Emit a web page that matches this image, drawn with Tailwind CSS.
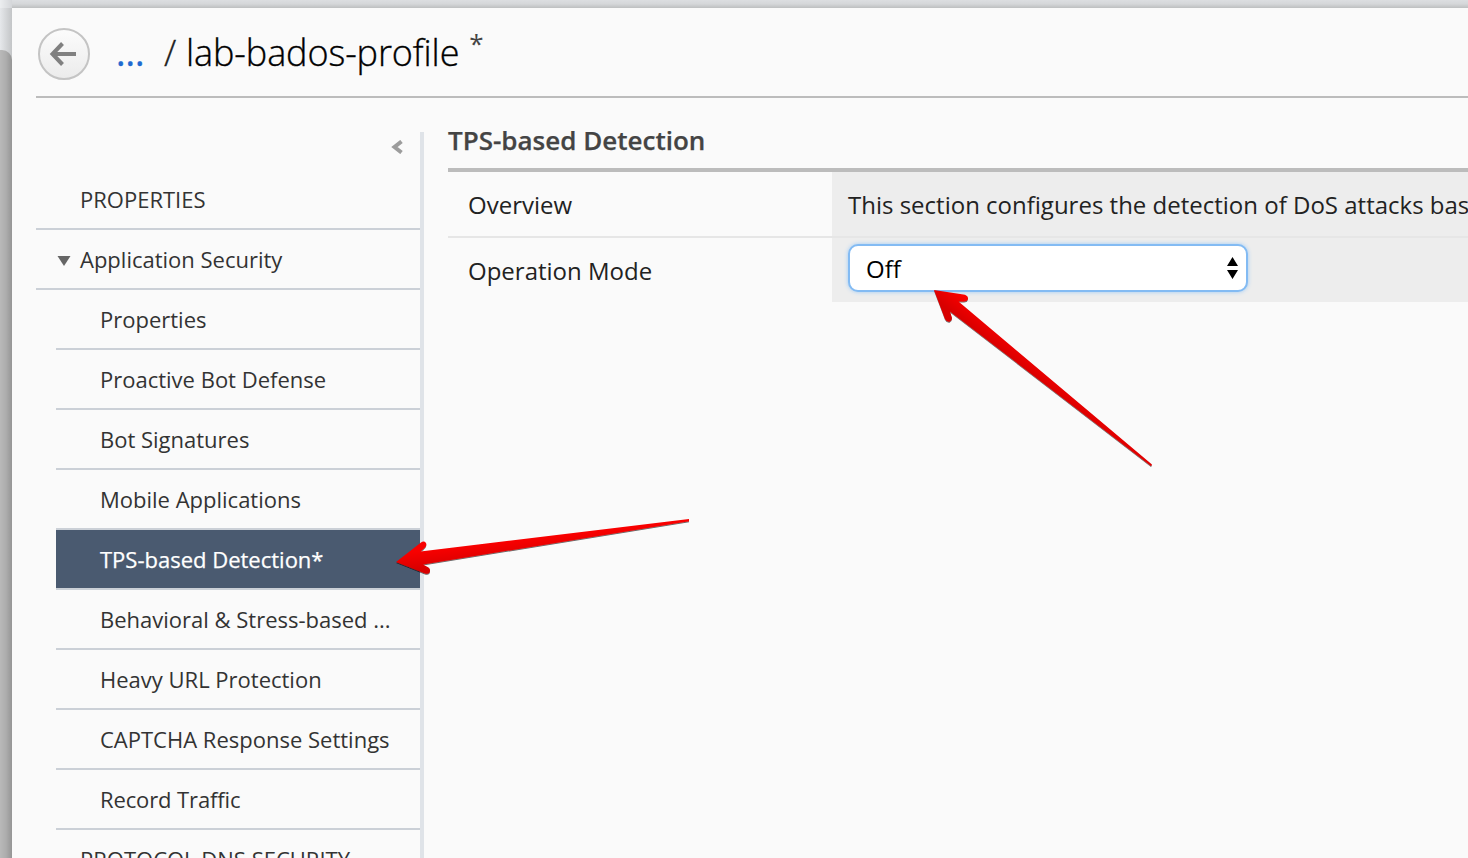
<!DOCTYPE html>
<html lang="en">
<head>
<meta charset="utf-8">
<title>lab-bados-profile</title>
<script src="https://cdn.jsdelivr.net/npm/@tailwindcss/browser@4"></script>
</head>
<body class="relative h-screen overflow-hidden bg-[#dfe2e5] font-['Open_Sans',sans-serif] text-[#333]">
<div class="flex h-screen flex-col">
  <div class="flex h-2 shrink-0"><div class="w-3 bg-linear-to-r from-[#eceef0] to-[#d4d6d9]"></div><div class="flex-1 bg-linear-to-b from-[#dcdee1] via-[#d5d7d9] to-[#bdbfc0]"></div></div>
  <div class="flex min-h-0 flex-1">
    <div class="flex w-3 shrink-0 flex-col bg-linear-to-r from-[#e6e8eb] to-[#c3c5c7] pt-[42px]">
      <div class="flex-1 rounded-tr-[10px] bg-linear-to-r from-[#b9b9b9] via-[#adadad] to-[#959595]"></div>
    </div>
    <div class="flex min-w-0 flex-1 flex-col bg-[#fafafa] pl-6">
      <header class="flex h-[90px] shrink-0 items-start border-b-2 border-[#bcbcbc]">
        <svg class="mt-[19px] ml-[1px] shrink-0" width="54" height="54" viewBox="0 0 54 54" fill="none">
          <defs><linearGradient id="b" x1="0" y1="0" x2="0" y2="1"><stop stop-color="#fcfcfc"/><stop offset="1" stop-color="#ebebeb"/></linearGradient></defs>
          <circle cx="27" cy="27" r="25" fill="url(#b)" stroke="#c4c4c4" stroke-width="2"/>
          <path d="M39 27H16M25.500 16.500L15.500 27L25.500 37.500" stroke="#808080" stroke-width="4"/>
        </svg>
        <div class="ml-[25px] flex whitespace-pre text-[36px] leading-[90px] font-light text-black">
          <span class="w-[48px] text-[#2069d0] font-normal [-webkit-text-stroke:0.4px_#2069d0]">...</span><span class="w-[22px] text-[#222] [-webkit-text-stroke:0.3px_#222]">/</span><span class="tracking-[-0.1px] [-webkit-text-stroke:0.35px_#000]">lab-bados-profile</span><span class="ml-[10px] -mt-[10px] text-[26px] font-normal text-[#444]">*</span>
        </div>
      </header>
      <div class="flex min-h-0 flex-1">
        <nav class="w-[384px] shrink-0 text-[22px] leading-[58px]">
          <div class="flex h-[72px] items-start justify-end pt-[42px] pr-[17px]">
            <svg width="12" height="14" viewBox="0 0 12 14"><path d="M10.500 1.500L3.500 7L10.500 12.500" fill="none" stroke="#9c9c9c" stroke-width="4"/></svg>
          </div>
          <div class="h-[60px] border-b-2 border-[#cbd0d7] pl-11">PROPERTIES</div>
          <div class="flex h-[60px] items-center border-b-2 border-[#cbd0d7] pl-[21px]">
            <svg class="mt-1" width="14" height="12" viewBox="0 0 14 12"><path d="M.5 1H13.500L7 11Z" fill="#666"/></svg>
            <span class="ml-[9px]">Application Security</span>
          </div>
          <div class="ml-5 *:h-[60px] *:border-b-2 *:border-[#cbd0d7] *:pl-11 whitespace-nowrap">
            <div>Properties</div>
            <div>Proactive Bot Defense</div>
            <div>Bot Signatures</div>
            <div>Mobile Applications</div>
            <div class="bg-[#4a5a70] text-white [-webkit-text-stroke:0.25px_#fff]">TPS-based Detection*</div>
            <div>Behavioral &amp; Stress-based ...</div>
            <div>Heavy URL Protection</div>
            <div>CAPTCHA Response Settings</div>
            <div class="tracking-[-0.12px]">Record Traffic</div>
          </div>
          <div class="pl-11">PROTOCOL DNS SECURITY</div>
        </nav>
        <main class="mt-[34px] flex min-w-0 flex-1 border-l-4 border-[#dfe3e8] pl-6">
          <div class="flex min-w-0 flex-1 flex-col">
            <h1 class="h-10 shrink-0 border-b-4 border-[#bcbcbc] text-[26px] leading-[16px] font-semibold text-[#444] [-webkit-text-stroke:0.25px_#444]">TPS-based Detection</h1>
            <div class="flex h-[66px] shrink-0 border-b-2 border-[#e6e6e6] text-2xl leading-[66px] text-[#222]">
              <div class="w-[384px] shrink-0 pl-5">Overview</div>
              <div class="min-w-0 flex-1 overflow-hidden bg-[#ededed] pl-4 whitespace-nowrap">This section configures the detection of DoS attacks based</div>
            </div>
            <div class="flex h-16 shrink-0 text-2xl text-[#222]">
              <div class="w-[384px] shrink-0 pl-5 leading-[66px]">Operation Mode</div>
              <div class="flex-1 bg-[#ededed] pt-[6px] pl-4">
                <div class="flex h-12 w-[400px] items-center justify-between rounded-[10px] border-2 border-[#83bbf3] bg-white pr-[7px] pl-4 text-black shadow-[0_0_4px_#9dcbf8]">
                  <span class="mt-[2px]">Off</span>
                  <svg width="12" height="22" viewBox="0 0 12 22"><path d="M5.500 0L11 9H0ZM5.500 22L11 13H0Z"/></svg>
                </div>
              </div>
            </div>
          </div>
        </main>
      </div>
    </div>
  </div>
</div>
<!-- Annotation arrows over the page -->
<svg class="absolute inset-0" width="1468" height="858" viewBox="0 0 1468 858">
  <defs>
    <linearGradient id="r1" gradientUnits="userSpaceOnUse" x1="1005" y1="330" x2="993" y2="345"><stop stop-color="#fa0000"/><stop offset="1" stop-color="#d80000"/></linearGradient>
    <linearGradient id="r2" gradientUnits="userSpaceOnUse" x1="430" y1="550" x2="432" y2="568"><stop stop-color="#f80000"/><stop offset="1" stop-color="#d80000"/></linearGradient>
    <filter id="s" x="-10%" y="-10%" width="120%" height="120%"><feDropShadow dx="0" dy="1" stdDeviation=".6" flood-color="#000" flood-opacity=".6"/></filter>
  </defs>
  <path filter="url(#s)" fill="url(#r1)" d="M934 290L965 294.700Q968.500 296 968 299Q967 301.500 964 301.500L958.500 301.500L1152 464.500L1151 466L950 311.500L952 318Q952 321 949.500 321.700Q946.500 322 945 319Z"/>
  <path filter="url(#s)" fill="url(#r2)" d="M396 562L421 542.500Q424 540.500 426 543Q427 545.500 425 547.500L420.500 551.500L689 519V521.200L423 564.500L428.500 567.500Q431 569.500 429.500 572.500Q428 574.500 425 573.500Z"/>
</svg>
</body>
</html>
